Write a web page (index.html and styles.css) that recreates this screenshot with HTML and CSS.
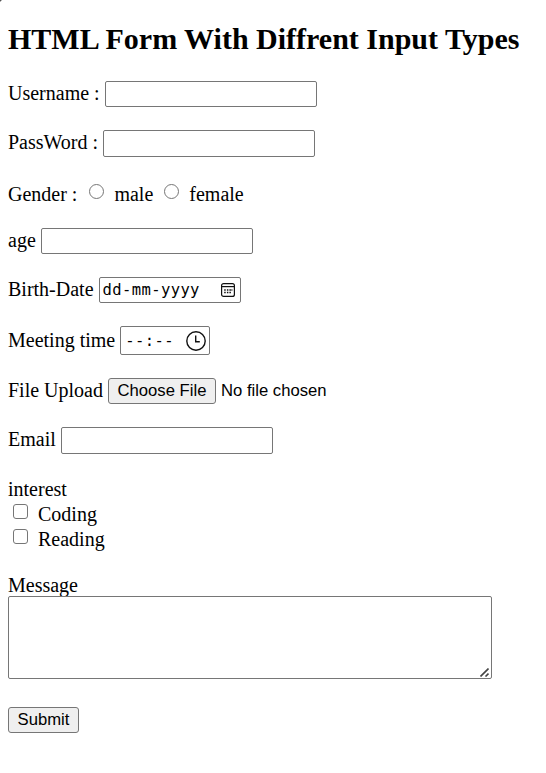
FILE: index.html
```html
<!DOCTYPE html>
<html lang="en">
<head>
<meta charset="utf-8">
<title>HTML Form</title>
<link rel="stylesheet" href="styles.css">
</head>
<body>
<h1>HTML Form With Diffrent Input Types</h1>
<form>
  <div class="row username"><label for="user">Username :</label><input class="box" id="user" type="text"></div>
  <div class="row password"><label for="pass">PassWord :</label><input class="box tall" id="pass" type="password"></div>
  <div class="row gender"><label>Gender :</label><input class="radio" id="male" type="radio" name="gender"><label for="male">male</label><input class="radio second" id="female" type="radio" name="gender"><label for="female">female</label></div>
  <div class="row age"><label for="age">age</label><input class="box" id="age" type="text"></div>
  <div class="row birth"><label>Birth-Date</label>
    <div class="box date"><span class="mono">dd-mm-yyyy</span>
      <svg width="14" height="14" viewBox="0 0 14 14" fill="none" stroke="#111" stroke-width="1.2"><rect x=".6" y=".6" width="12.8" height="12.8" rx="2"/><path d="M1 3.6h12"/><path d="M5.9 7h1.5M8.4 7h1.5M10.4 7h1M3.2 7h1.5M3.2 9.5h1.5M5.9 9.5h1.5M8.4 9.5h1.5" stroke-width="1.5"/></svg>
    </div>
  </div>
  <div class="row meeting"><label>Meeting time</label>
    <div class="box time"><span class="mono">--:--</span>
      <svg width="20" height="20" viewBox="0 0 20 20" fill="none" stroke="#111" stroke-width="1.4"><circle cx="10" cy="10" r="9.2"/><path d="M9.7 4.5v6.2h4.1"/></svg>
    </div>
  </div>
  <div class="row file"><label>File Upload</label><button class="button choose" type="button">Choose File</button><span class="status">No file chosen</span></div>
  <div class="row email"><label for="email">Email</label><input class="box tall" id="email" type="email"></div>
  <div class="row interest"><label>interest</label></div>
  <div class="row option"><input class="check" id="coding" type="checkbox"><label for="coding">Coding</label></div>
  <div class="row option"><input class="check" id="reading" type="checkbox"><label for="reading">Reading</label></div>
  <div class="row message"><label for="message">Message</label></div>
  <div class="area"><textarea id="message"></textarea>
    <svg class="grip" width="9" height="9" viewBox="0 0 9 9" stroke="#444" stroke-width="1.6"><path d="M.5 8.5l8-8M5.5 8.5l3-3"/></svg>
  </div>
  <button class="button submit" type="button">Submit</button>
</form>
</body>
</html>
```
FILE: styles.css
```css
* { box-sizing: border-box; }
body {
  margin: 0;
  padding: 22px 8px 0;
  color: #000;
  background: radial-gradient(circle at 0 0, #555 0 1px, transparent 2px) no-repeat, #fff;
  font: 20px/22px "Liberation Serif", serif;
}
h1 { margin: 0; font-size: 30px; line-height: 34px; white-space: nowrap; }
label { padding-top: 1px; }
.row { display: flex; align-items: flex-start; height: 22px; white-space: nowrap; }
.username { margin-top: 25px; }
.password { margin-top: 27px; }
.gender { margin-top: 30px; }
.age { margin-top: 24px; }
.birth { margin-top: 27px; }
.meeting { margin-top: 29px; }
.file { margin-top: 28px; }
.email { margin-top: 27px; }
.interest { margin-top: 28px; }
.option { margin-top: 3px; }
.message { margin-top: 24px; }
.box {
  appearance: none;
  flex: none;
  width: 212px;
  height: 26px;
  margin: 0 0 0 5px;
  padding: 0 2px;
  border: 1px solid #767676;
  border-radius: 2px;
  background: #fff;
}
.tall { height: 27px; }
.radio, .check {
  appearance: none;
  flex: none;
  width: 15px;
  height: 15px;
  border: 1px solid #767676;
  background: #fff;
}
.radio { margin: 2px 10px 0 12px; border-radius: 50%; }
.second { margin-left: 11px; }
.check { margin: 2px 10px 0 5px; border-radius: 3px; }
.date, .time { display: flex; align-items: center; justify-content: space-between; }
.date { width: 142px; padding: 0 5px 0 3px; }
.time { width: 90px; height: 29px; margin-top: -2px; padding: 0 3px 0 4px; }
.mono { font: 15.5px/22px "DejaVu Sans Mono", monospace; letter-spacing: .4px; }
.button {
  flex: none;
  height: 26px;
  margin: 0;
  padding: 0;
  border: 1px solid #767676;
  border-radius: 3px;
  color: #000;
  background: #efefef;
  font: 16.67px/22px "Liberation Sans", sans-serif;
}
.choose { width: 108px; margin-left: 5px; }
.status { margin-left: 5px; font: 16.67px/25px "Liberation Sans", sans-serif; }
.area { position: relative; width: 484px; height: 83px; margin-top: 1px; }
textarea {
  display: block;
  width: 100%;
  height: 100%;
  margin: 0;
  border: 1px solid #767676;
  border-radius: 2px;
  resize: none;
}
.grip { position: absolute; right: 3px; bottom: 2px; }
.submit { display: block; width: 71px; margin-top: 28px; }
```
